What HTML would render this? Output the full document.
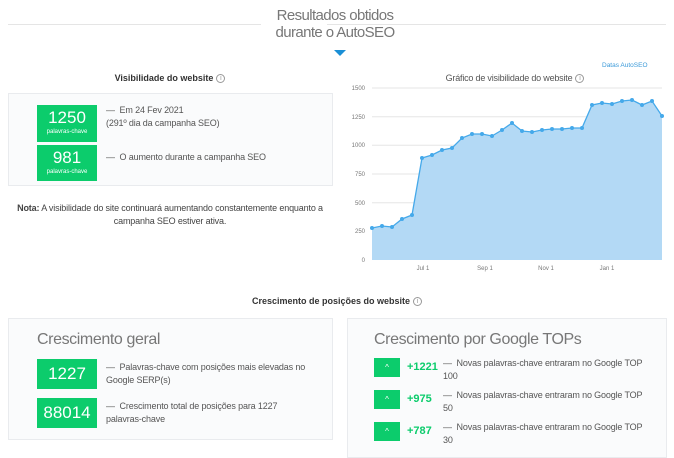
<!DOCTYPE html>
<html><head><meta charset="utf-8"><style>
*{margin:0;padding:0;box-sizing:border-box}
body{width:674px;height:452px;background:#fff;font-family:"Liberation Sans",sans-serif;color:#444;position:relative;overflow:hidden}
.a{position:absolute}
.box{position:absolute;background:#fafbfc;border:1px solid #e9ebee}
.g{position:absolute;background:#0ccc6c;color:#fff;text-align:center}
.info{display:inline-block;width:9px;height:9px;border:1px solid #999;border-radius:50%;font-size:7px;line-height:8px;text-align:center;color:#999;font-weight:normal;vertical-align:middle;margin-left:3px}
.t{font-size:9px;color:#555;line-height:13px;letter-spacing:-0.15px}
.h{font-size:16px;color:#777;letter-spacing:-0.4px}
.up{position:absolute;width:26px;height:19px;background:#0ccc6c;color:#fff;font-size:8px;text-align:center;line-height:19px}
.num{position:absolute;color:#0ccc6c;font-weight:bold;font-size:11px}
</style></head><body>
<div class="a" style="left:8px;top:24px;width:253px;height:1px;background:#e5e5e5"></div>
<div class="a" style="left:327px;top:24px;width:339px;height:1px;background:#e5e5e5"></div>
<div class="a" style="left:260px;top:7px;width:150px;text-align:center;font-size:15px;color:#777;line-height:17px;letter-spacing:-0.6px">Resultados obtidos<br>durante o AutoSEO</div>
<div class="a" style="left:334px;top:50px;width:0;height:0;border-left:6px solid transparent;border-right:6px solid transparent;border-top:6px solid #1a8fd6"></div>
<div class="a" style="left:0;top:73px;width:340px;text-align:center;font-size:9px;font-weight:bold;color:#333">Visibilidade do website<span class="info">i</span></div>
<div class="box" style="left:8px;top:93px;width:325px;height:93px"></div>
<div class="g" style="left:37px;top:105px;width:60px;height:37px"><div style="font-size:17px;line-height:22px;padding-top:2px">1250</div><div style="font-size:6px">palavras-chave</div></div>
<div class="g" style="left:37px;top:145px;width:60px;height:36px"><div style="font-size:17px;line-height:22px;padding-top:2px">981</div><div style="font-size:6px">palavras-chave</div></div>
<div class="a t" style="left:106px;top:104px">— &nbsp;Em 24 Fev 2021<br>(291º dia da campanha SEO)</div>
<div class="a t" style="left:106px;top:151px">— &nbsp;O aumento durante a campanha SEO</div>
<div class="a t" style="left:0;top:202px;width:340px;text-align:center;color:#444"><b>Nota:</b> A visibilidade do site continuará aumentando constantemente enquanto a<br>campanha SEO estiver ativa.</div>
<div class="a" style="left:602px;top:62px;font-size:6.5px;color:#3b9ad9">Datas AutoSEO</div>
<div class="a" style="left:390px;top:73px;width:250px;text-align:center;font-size:9px;color:#555;letter-spacing:-0.2px">Gráfico de visibilidade do website<span class="info">i</span></div>
<svg class="a" style="left:340px;top:80px" width="334" height="195" viewBox="340 80 334 195">
<g stroke="#e6e6e6" stroke-width="1">
<line x1="372" y1="88" x2="662" y2="88"/><line x1="372" y1="116.7" x2="662" y2="116.7"/><line x1="372" y1="145.3" x2="662" y2="145.3"/><line x1="372" y1="174" x2="662" y2="174"/><line x1="372" y1="202.7" x2="662" y2="202.7"/><line x1="372" y1="231.3" x2="662" y2="231.3"/>
</g>
<g font-size="6" fill="#777" font-family="Liberation Sans" text-anchor="end">
<text x="365" y="90">1500</text><text x="365" y="119">1250</text><text x="365" y="147">1000</text><text x="365" y="176">750</text><text x="365" y="205">500</text><text x="365" y="233">250</text><text x="365" y="262">0</text></g>
<g font-size="6" fill="#777" font-family="Liberation Sans" text-anchor="middle">
<text x="423" y="270">Jul 1</text><text x="485" y="270">Sep 1</text><text x="546" y="270">Nov 1</text><text x="607" y="270">Jan 1</text></g>
<path d="M372,228 L382,226 392,227 402,219 412,215 422,158 432,155 442,150 452,148 462,138 472,134 482,134 492,136 502,130 512,123 522,131 532,132 542,130 552,129 562,129 572,128 582,128 592,105 602,103 612,104 622,101 632,100 642,105 652,101 662,116 L662,260 L372,260 Z" fill="#b3d9f5"/>
<polyline points="372,228 382,226 392,227 402,219 412,215 422,158 432,155 442,150 452,148 462,138 472,134 482,134 492,136 502,130 512,123 522,131 532,132 542,130 552,129 562,129 572,128 582,128 592,105 602,103 612,104 622,101 632,100 642,105 652,101 662,116" fill="none" stroke="#45a9ea" stroke-width="1.3"/>
<g fill="#45a9ea">
<circle cx="372" cy="228" r="2"/><circle cx="382" cy="226" r="2"/><circle cx="392" cy="227" r="2"/><circle cx="402" cy="219" r="2"/><circle cx="412" cy="215" r="2"/><circle cx="422" cy="158" r="2"/><circle cx="432" cy="155" r="2"/><circle cx="442" cy="150" r="2"/><circle cx="452" cy="148" r="2"/><circle cx="462" cy="138" r="2"/><circle cx="472" cy="134" r="2"/><circle cx="482" cy="134" r="2"/><circle cx="492" cy="136" r="2"/><circle cx="502" cy="130" r="2"/><circle cx="512" cy="123" r="2"/><circle cx="522" cy="131" r="2"/><circle cx="532" cy="132" r="2"/><circle cx="542" cy="130" r="2"/><circle cx="552" cy="129" r="2"/><circle cx="562" cy="129" r="2"/><circle cx="572" cy="128" r="2"/><circle cx="582" cy="128" r="2"/><circle cx="592" cy="105" r="2"/><circle cx="602" cy="103" r="2"/><circle cx="612" cy="104" r="2"/><circle cx="622" cy="101" r="2"/><circle cx="632" cy="100" r="2"/><circle cx="642" cy="105" r="2"/><circle cx="652" cy="101" r="2"/><circle cx="662" cy="116" r="2"/></g>
</svg>
<div class="a" style="left:0;top:296px;width:674px;text-align:center;font-size:9px;font-weight:bold;color:#333">Crescimento de posições do website<span class="info">i</span></div>
<div class="box" style="left:8px;top:318px;width:325px;height:122px"></div>
<div class="a h" style="left:37px;top:331px">Crescimento geral</div>
<div class="g" style="left:37px;top:359px;width:60px;height:30px;font-size:17px;line-height:30px">1227</div>
<div class="g" style="left:37px;top:398px;width:60px;height:30px;font-size:17px;line-height:30px">88014</div>
<div class="a t" style="left:106px;top:361px">— &nbsp;Palavras-chave com posições mais elevadas no<br>Google SERP(s)</div>
<div class="a t" style="left:106px;top:400px">— &nbsp;Crescimento total de posições para 1227<br>palavras-chave</div>
<div class="box" style="left:347px;top:318px;width:320px;height:140px"></div>
<div class="a h" style="left:374px;top:331px">Crescimento por Google TOPs</div>
<div class="up" style="left:374px;top:358px">^</div><div class="num" style="left:407px;top:361px">+1221</div><div class="a t" style="left:443px;top:357px">— &nbsp;Novas palavras-chave entraram no Google TOP<br>100</div>
<div class="up" style="left:374px;top:390px">^</div><div class="num" style="left:407px;top:393px">+975</div><div class="a t" style="left:443px;top:389px">— &nbsp;Novas palavras-chave entraram no Google TOP<br>50</div>
<div class="up" style="left:374px;top:422px">^</div><div class="num" style="left:407px;top:425px">+787</div><div class="a t" style="left:443px;top:421px">— &nbsp;Novas palavras-chave entraram no Google TOP<br>30</div>
</body></html>
